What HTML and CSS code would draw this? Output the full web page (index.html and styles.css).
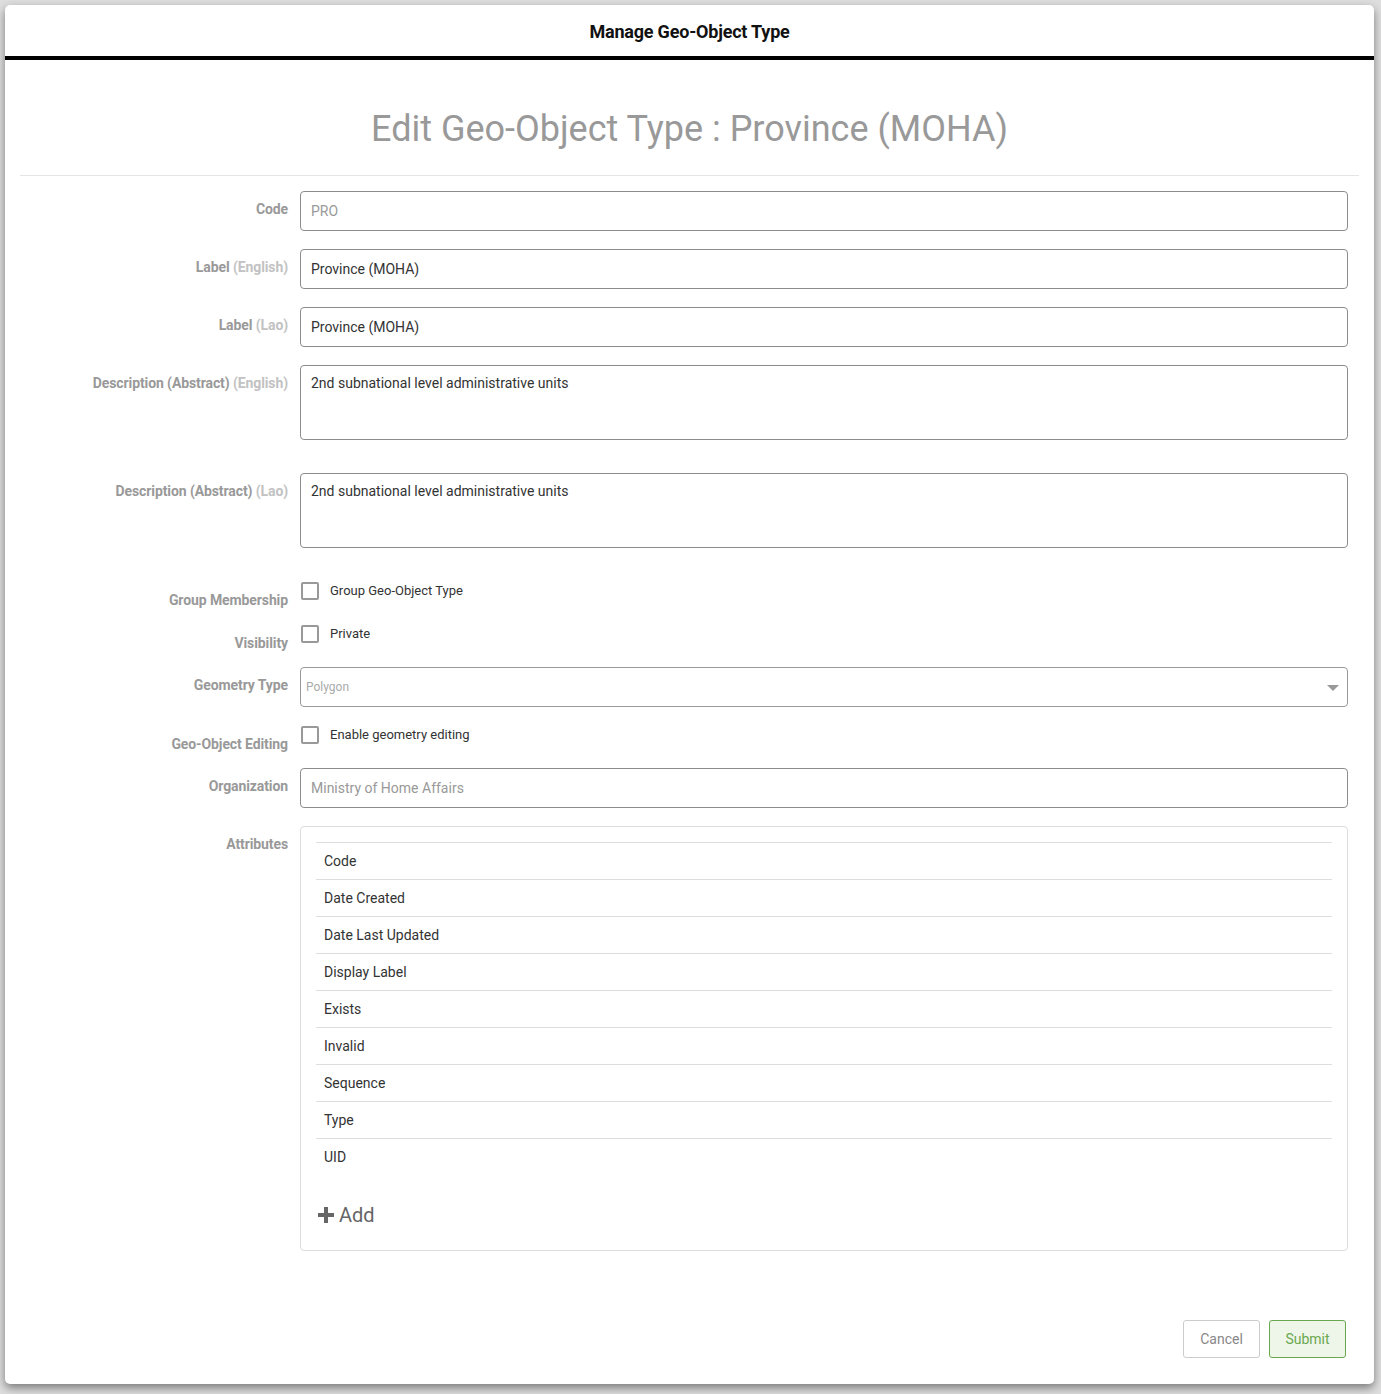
FILE: index.html
```html
<!DOCTYPE html>
<html lang="en">
<head>
<meta charset="utf-8">
<title>Manage Geo-Object Type</title>
<link rel="stylesheet" href="styles.css">
</head>
<body>
<div class="modal">
  <div class="modal-header">Manage Geo-Object Type</div>
  <div class="modal-body">
    <h2 class="page-title">Edit Geo-Object Type : Province (MOHA)</h2>
    <div class="form">
      <div class="row">
        <label class="lbl">Code</label>
        <div class="field"><div class="input placeholder">PRO</div></div>
      </div>
      <div class="row">
        <label class="lbl">Label <span class="lang">(English)</span></label>
        <div class="field"><div class="input">Province (MOHA)</div></div>
      </div>
      <div class="row">
        <label class="lbl">Label <span class="lang">(Lao)</span></label>
        <div class="field"><div class="input">Province (MOHA)</div></div>
      </div>
      <div class="row row-ta">
        <label class="lbl">Description (Abstract) <span class="lang">(English)</span></label>
        <div class="field"><div class="textarea">2nd subnational level administrative units</div></div>
      </div>
      <div class="row row-ta">
        <label class="lbl">Description (Abstract) <span class="lang">(Lao)</span></label>
        <div class="field"><div class="textarea">2nd subnational level administrative units</div></div>
      </div>
      <div class="row row-check">
        <label class="lbl lbl-low">Group Membership</label>
        <div class="field check"><span class="box"></span><span class="check-text">Group Geo-Object Type</span></div>
      </div>
      <div class="row row-check">
        <label class="lbl lbl-low">Visibility</label>
        <div class="field check"><span class="box"></span><span class="check-text">Private</span></div>
      </div>
      <div class="row">
        <label class="lbl">Geometry Type</label>
        <div class="field"><div class="select"><span>Polygon</span><span class="caret"></span></div></div>
      </div>
      <div class="row row-check">
        <label class="lbl lbl-low">Geo-Object Editing</label>
        <div class="field check"><span class="box"></span><span class="check-text">Enable geometry editing</span></div>
      </div>
      <div class="row">
        <label class="lbl">Organization</label>
        <div class="field"><div class="input placeholder">Ministry of Home Affairs</div></div>
      </div>
      <div class="row row-last">
        <label class="lbl">Attributes</label>
        <div class="field">
          <div class="panel">
            <ul class="attr-list">
              <li>Code</li>
              <li>Date Created</li>
              <li>Date Last Updated</li>
              <li>Display Label</li>
              <li>Exists</li>
              <li>Invalid</li>
              <li>Sequence</li>
              <li>Type</li>
              <li>UID</li>
            </ul>
            <div class="add"><svg class="plus" width="16" height="16" viewBox="0 0 16 16"><path d="M6 0h4v6h6v4h-6v6H6v-6H0V6h6z" fill="#666"/></svg><span>Add</span></div>
          </div>
        </div>
      </div>
    </div>
  </div>
  <div class="modal-footer">
    <button class="btn btn-cancel">Cancel</button>
    <button class="btn btn-submit">Submit</button>
  </div>
</div>
</body>
</html>
```

FILE: styles.css
```css
html, body {
  margin: 0;
  padding: 0;
}
body {
  background: #dedede;
  font-family: Roboto, "Liberation Sans", sans-serif;
  color: #333;
  width: 1381px;
  height: 1394px;
  overflow: hidden;
}
.modal {
  margin: 5px 0 0 5px;
  width: 1369px;
  height: 1379px;
  background: #fff;
  border-radius: 5px;
  box-shadow: 0 4px 10px rgba(0,0,0,0.45);
  display: flex;
  flex-direction: column;
  box-sizing: border-box;
}
.modal-header {
  height: 51px;
  line-height: 53px;
  text-align: center;
  font-size: 18px;
  font-weight: 700;
  color: #111;
  border-bottom: 4px solid #000;
  letter-spacing: -0.2px;
}
.modal-body {
  padding: 0 15px;
  flex: 1;
}
.page-title {
  margin: 0;
  padding: 49px 0 26px;
  line-height: 40px;
  font-size: 36px;
  font-weight: 400;
  color: #999;
  text-align: center;
  border-bottom: 1px solid #e5e5e5;
}
.form {
  padding: 15px 11px 0 0;
}
.row {
  display: grid;
  grid-template-columns: 268px 1fr;
  column-gap: 12px;
  margin-bottom: 18px;
}
.row-ta { margin-bottom: 33px; }
.row-check { margin-bottom: 14px; }
.row-last { margin-bottom: 0; }
.lbl {
  text-align: right;
  padding-top: 8px;
  line-height: 20px;
  font-size: 14px;
  font-weight: 700;
  color: #999;
  letter-spacing: -0.1px;
}
.lbl-low { padding-top: 9px; }
.lang {
  color: #c2c2c2;
  font-weight: 700;
}
.input, .textarea, .select {
  border: 1px solid #8c8c8c;
  border-radius: 4px;
  box-sizing: border-box;
  font-size: 14px;
  color: #333;
}
.input {
  height: 40px;
  line-height: 38px;
  padding: 0 10px;
}
.placeholder { color: #999; }
.textarea {
  height: 75px;
  padding: 7px 10px;
  line-height: 20px;
}
.select {
  height: 40px;
  line-height: 38px;
  padding: 0 5px;
  font-size: 12px;
  color: #aaa;
  display: flex;
  justify-content: space-between;
  align-items: center;
  border-color: #999;
}
.caret {
  width: 0;
  height: 0;
  border-left: 6px solid transparent;
  border-right: 6px solid transparent;
  border-top: 6px solid #999;
  margin-right: 3px;
  margin-top: 1px;
}
.check {
  display: flex;
  align-items: flex-start;
}
.box {
  width: 18px;
  height: 18px;
  margin-top: 1px;
  margin-left: 1px;
  border: 2px solid #999;
  border-radius: 2px;
  box-sizing: border-box;
}
.check-text {
  margin-left: 11px;
  margin-top: 1px;
  font-size: 13px;
  line-height: 18px;
  color: #333;
}
.panel {
  border: 1px solid #ddd;
  border-radius: 4px;
  padding: 15px;
  height: 425px;
  box-sizing: border-box;
}
.attr-list {
  list-style: none;
  margin: 0;
  padding: 0;
}
.attr-list li {
  border-top: 1px solid #ddd;
  padding: 8px 8px;
  line-height: 20px;
  font-size: 14px;
  color: #333;
}
.add {
  margin-top: 20px;
  height: 40px;
  display: flex;
  align-items: center;
  padding-left: 2px;
  font-size: 20px;
  color: #666;
}
.plus { margin-right: 5px; }
.modal-footer {
  display: flex;
  justify-content: flex-end;
  gap: 9px;
  padding: 0 28px 26px 0;
}
.btn {
  height: 38px;
  width: 77px;
  border-radius: 3px;
  font-family: Roboto, "Liberation Sans", sans-serif;
  font-size: 14px;
  background: #fff;
  padding: 0;
}
.btn-cancel {
  border: 1px solid #ccc;
  color: #888;
}
.btn-submit {
  border: 1px solid #6aa84f;
  background: #eef5e9;
  color: #6aa84f;
}
```
